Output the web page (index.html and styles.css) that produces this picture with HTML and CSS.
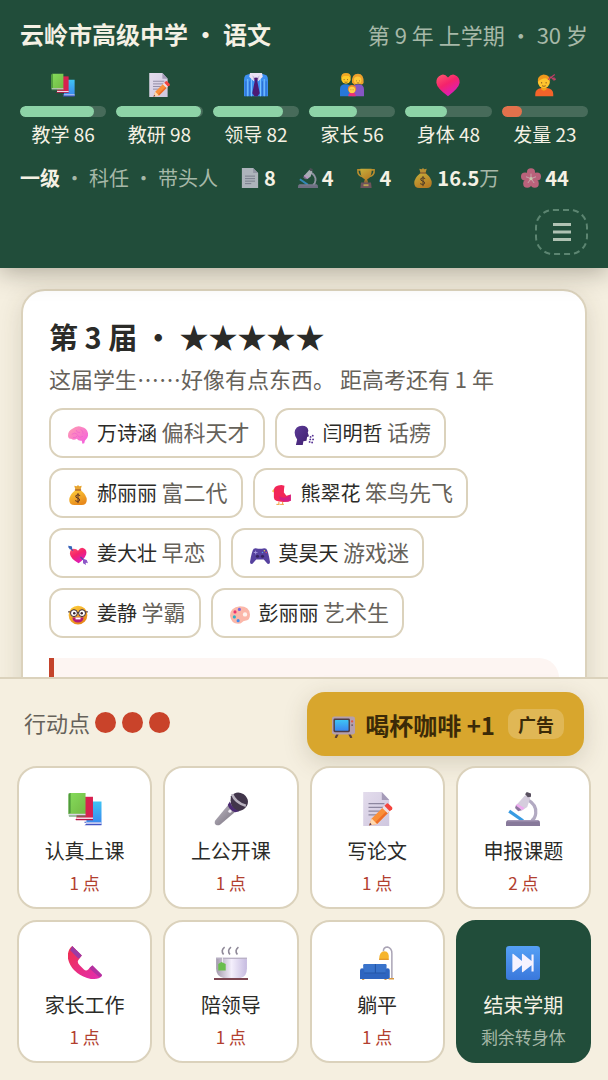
FILE: index.html
```html
<!DOCTYPE html>
<html lang="zh-CN">
  <head>
    <meta charset="UTF-8" />
    <meta name="viewport" content="width=device-width, initial-scale=1.0" />
    <title>云岭市高级中学</title>
    <link rel="stylesheet" href="styles.css">
  </head>
  <body>
    <!-- icons -->
    <svg class="sprite" aria-hidden="true">
      <defs>
        <linearGradient id="g-green" x2="1" y2="1"><stop stop-color="#86dc5c" /><stop offset="1" stop-color="#72b944" /></linearGradient>
        <linearGradient id="g-blue" x2="0" y2="1"><stop stop-color="#3fc4f4" /><stop offset="1" stop-color="#3a86ee" /></linearGradient>
        <linearGradient id="g-page" x2="1" y2="1"><stop stop-color="#e3dcec" /><stop offset="1" stop-color="#cfc7df" /></linearGradient>
        <linearGradient id="g-heart" x2="0.6" y2="1"><stop stop-color="#ff5a6e" /><stop offset=".5" stop-color="#f5236b" /><stop offset="1" stop-color="#d91cc0" /></linearGradient>
        <linearGradient id="g-gold" x2="0.5" y2="1"><stop stop-color="#ffd23c" /><stop offset="1" stop-color="#e88a1c" /></linearGradient>
        <linearGradient id="g-phone" x2="1" y2="1"><stop stop-color="#f0304a" /><stop offset="1" stop-color="#e32cb4" /></linearGradient>
        <linearGradient id="g-cup" x2="1"><stop stop-color="#a39aad" /><stop offset=".5" stop-color="#f4effc" /><stop offset="1" stop-color="#c6bbe0" /></linearGradient>
        <linearGradient id="g-mic" x2="1" y2="1"><stop stop-color="#c5c0ca" /><stop offset="1" stop-color="#6f6876" /></linearGradient>
        <linearGradient id="g-next" x2="0" y2="1"><stop stop-color="#55a0f5" /><stop offset="1" stop-color="#3a78dc" /></linearGradient>
        <linearGradient id="g-brain" x2="1" y2="1"><stop stop-color="#ff9fb0" /><stop offset="1" stop-color="#f45be0" /></linearGradient>
        <linearGradient id="g-head" x2="1" y2="1"><stop stop-color="#5b3a96" /><stop offset="1" stop-color="#402070" /></linearGradient>
      </defs>
      <symbol id="i-books" viewBox="0 0 32 32">
        <path fill="url(#g-blue)" d="M19 9h12.500v21.500H17z" /><path fill="#d9d0ee" d="M17 28.500h14.500v1.500H17z" /><path fill="#4254c4" d="M15.500 28h1.500v1h-1.500zM17 30h14.500v1.200H15.500z" />
        <path fill="#d8204f" d="M8 4.500h15.500v21H8z" /><path fill="#f0dce6" d="M8 24h15.500v1.500H8z" /><path fill="#b71445" d="M7 25.500h16.500v1H7.500z" />
        <path fill="url(#g-green)" d="M2 1h14.500v20H0.500V2.500z" /><path fill="#4f9a3c" d="M0.500 1.500 2.500 1v19l-2 1z" /><path fill="#dcd5e8" d="M1 20.500h15.500v1.500H1z" /><path fill="#4d8b52" d="M.5 22h16v1H1z" />
      </symbol>
      <symbol id="i-memo" viewBox="0 0 32 32">
        <path fill="url(#g-page)" d="M3 0h17.500l7 7.500V32H3z" /><path fill="#a59bb8" d="M20.500 0v7.500h7z" />
        <path stroke="#8d87a0" stroke-width="1.200" d="M8 11h15M8 14.500h14M8 18h11M8 21.500h8" />
        <path fill="#f98f3a" d="m11 25 11-11 5 5-11 11-7.500 1.500z" /><path fill="#ee6d28" d="m14.500 28.500 11-11 1.500 1.500-11 11z" /><path fill="#ffd8b0" d="m11 25 5 5-7.500 1.500z" /><path fill="#5a3048" d="m9.500 29 1.500 1.500-2.500 1z" />
        <path fill="#efdfe4" d="m21 15 2-2 5 5-2 2z" /><path fill="#f4443e" d="m23 13 2-2q1-.8 2 .2l3 3q1 1 .2 2L28 18z" />
      </symbol>
      <symbol id="i-shirt" viewBox="0 0 32 32">
        <path fill="#3c8ff0" d="M8 1h16l6 2q2 2 2 6v22H0V9q0-4 2-6z" /><path stroke="#79c2ff" stroke-width="1.400" d="M5 8v23M10 7v24M22 7v24M27 8v23" /><path stroke="#2860c8" d="M2.500 11v20M7.500 11v20M24.500 11v20M29.500 11v20" />
        <path fill="#e9e2f4" d="M8 0h16l1 5-6 6-3-5-3 5-6-6z" /><path fill="#c4b9d8" d="m11 3 5 4 5-4-2 7-3-4-3 4z" /><path fill="#4c1b74" d="m13.500 7 2.500-1 2.500 1-.8 4L21 27l-3 4h-4l-3-4 3.300-16z" />
      </symbol>
      <symbol id="i-family" viewBox="0 0 32 32">
        <path fill="#2878d8" d="M0 31V21q0-6 7-6t9 5v11z" /><path fill="#8656c4" d="M16 31V20q2-5 8-5 8 0 8 7v9z" />
        <path fill="#eda02c" d="M16 13q-1-12 8-12 8 0 7.500 12-1 3-4 2l-4-2-4 3z" /><circle cx="8" cy="8" r="6.300" fill="#ffca28" /><path fill="#f0a824" d="M1.500 7Q1 0 8 0t6.500 7L12 4H5z" /><circle cx="23.500" cy="9.500" r="5" fill="#ffc93a" />
        <path fill="#e8307c" d="M11 31q0-5 5-5t5 5z" /><circle cx="16" cy="21.500" r="5.500" fill="#ef8a2e" /><circle cx="16" cy="22.500" r="4.200" fill="#ffd04a" /><path fill="none" stroke="#6a3a20" stroke-width=".8" d="M5.500 8v1.500M10 8v1.500M22 10v1M26 10v1M14.500 22v.8M17.500 22v.8M6 12q2 1 4 0M22.500 13q1.500 1 3 0" />
      </symbol>
      <symbol id="i-heart" viewBox="0 0 32 32"><path fill="url(#g-heart)" d="M16 6q4-5 9-3.500Q32 5 31.500 13q-1 7-15.500 18Q1 20 .5 13 0 5 7 2.500 12 1 16 6z" /></symbol>
      <symbol id="i-hair" viewBox="0 0 32 32">
        <path fill="#f4632a" d="M3 31v-3q0-7 8-8h8q8 1 8 8v3z" /><path fill="#f2a018" d="M11 15h7v7q-3.500 3-7 0z" /><circle cx="14.500" cy="12" r="8" fill="#ffc52e" /><path fill="#f0981c" d="M6.500 12Q5 4 14 2q8 0 9 8l-6-3q-6 0-10.500 5z" />
        <path fill="none" stroke="#71401e" d="M11.500 12v2M17.500 12v2M12 17q2.500 1.500 5 0" /><path stroke="#c43c68" stroke-width="1.500" d="m20 9 9-7M22 5l8 4" /><circle cx="28" cy="8" r="1.600" fill="none" stroke="#d8446c" />
      </symbol>
      <symbol id="i-page" viewBox="0 0 32 32"><path fill="#dcd6e6" d="M3 0h18l8 8v24H3z" /><path fill="#b7adc6" d="M21 0v8h8z" /><path stroke="#928aa4" stroke-width="1.500" d="M8 13h16M8 17h16M8 21h16M8 25h10" /></symbol>
      <symbol id="i-scope" viewBox="0 0 32 32">
        <path fill="none" stroke="#b2aac2" stroke-width="3" d="M20 7q9 5 8 13-.5 5-4 7" /><path fill="#d5cddd" d="m10 12 8-9 5 2-3 9-6 4-5-3z" /><path fill="#8d749e" d="m9.500 12 5 5-3 1-3-3z" /><path fill="#58505f" d="m18 2 1.500-2 4 1.500v3l-3 .5z" /><path fill="#efaaf0" d="m10.500 11 7 4-2 2-6-4z" /><path stroke="#389be2" stroke-width="3" d="m3 18 13 9" />
        <path fill="#87799a" d="M2 26.500h28q2 0 2 3V32H0v-2.500q0-3 2-3z" /><path fill="#a698b7" d="M2 26.500h28v1.200H2z" />
      </symbol>
      <symbol id="i-trophy" viewBox="0 0 32 32"><path fill="none" stroke="#e9a22a" stroke-width="2.500" d="M8 3H3q-1 9 8 11M24 3h5q1 9-8 11" /><path fill="url(#g-gold)" d="M7 1h18q1 13-7 17v4h-4v-4Q6 14 7 1z" /><path fill="#b97835" d="M13 20h6v4h-6z" /><path fill="#885668" d="M8 23h16l1 9H7z" /><path fill="#ecc05a" d="M12 26h8v3h-8z" /></symbol>
      <symbol id="i-bag" viewBox="0 0 32 32"><path fill="#e9a631" d="m10 1 4 1 2-2 2 2 4-1-2 7h-8z" /><path fill="url(#g-gold)" d="M12 8h8q10 8 10 16 0 8-8 8H10q-8 0-8-8Q2 16 12 8z" /><path stroke="#a85c27" stroke-width="2" d="M11 8h10" /><path fill="none" stroke="#5c3422" stroke-width="1.600" d="M19.500 17q-4-3-7 0-1 3 3 4t3 4q-3 3-7 0M16 13v16" /></symbol>
      <symbol id="i-flower" viewBox="0 0 32 32"><g fill="#ee6a91"><circle cx="16" cy="7" r="6.500" /><circle cx="25.500" cy="13.500" r="6.500" /><circle cx="22" cy="25" r="6.500" /><circle cx="10" cy="25" r="6.500" /><circle cx="6.500" cy="13.500" r="6.500" /><circle cx="16" cy="17" r="8" /></g><path stroke="#ffd7df" stroke-width="1.300" d="M16 17V9M16 17l8-3M16 17l5 7M16 17l-5 7M16 17l-8-3" /><circle cx="16" cy="17" r="2.500" fill="#fff0ce" /></symbol>
      <symbol id="i-brain" viewBox="0 0 32 32"><path fill="url(#g-brain)" d="M0 17Q0 9 7 6q7-6 15-3 8 1 10 10 1 8-5 12l-1 4-3 1-1-5q-5 1-8-3-5 3-9 0Q0 22 0 17z" /><path fill="none" stroke="#ee5fcb" d="M6 15q5-4 9 0M13 8q1 5 6 4M20 7q5 2 4 7M8 20q5 1 7-3 4 5 9 1" /></symbol>
      <symbol id="i-talk" viewBox="0 0 32 32"><path fill="url(#g-head)" d="M1 12Q2 1 13 1q9 0 10 8l-1 3 2 6-3 1-1 6-5 1-1 6H3l2-9Q1 18 1 12z" /><g fill="#563393"><circle cx="26.500" cy="19" r="1.500" /><circle cx="30" cy="17" r="1.500" /><circle cx="26" cy="23" r="1.500" /><circle cx="30.500" cy="23" r="1.500" /><circle cx="25" cy="27" r="1.500" /><circle cx="29" cy="28" r="1.500" /></g></symbol>
      <symbol id="i-bird" viewBox="0 0 32 32"><path fill="#f22658" d="M3 8q0-7 12-8l5 1q-1 5-1 11l4 5 7-2v10q-4 2-12 2-15 0-15-7z" /><path fill="#d41d84" d="M12 18q6 4 12 1l6-4v10q-8 3-14 0-5-2-4-7z" /><path fill="#f3af37" d="m0 10 3-4v6z" /><path fill="none" stroke="#f0a344" stroke-width="1.600" d="M11 27v4M17 27v4M7 31h5M13 31h6" /></symbol>
      <symbol id="i-arrow" viewBox="0 0 32 32"><path fill="url(#g-heart)" d="M16 9q4-6 9-4 6 3 4 10-3 8-12 14Q4 22 3 14 3 7 9 6q5 0 7 3z" /><path stroke="#5748a8" stroke-width="2" d="m1 3 7 6M20 19l9 9" /><path fill="#3566ba" d="m0 1 6 1 1 4-4 1z" /><path fill="#8d57c8" d="m24 22 6 2 2 5-4-1 1 4-5-3z" /></symbol>
      <symbol id="i-pad" viewBox="0 0 32 32"><path fill="#56419f" d="M6 6q3-2 7 0h6q4-2 7 0 3 3 6 21 0 4-4 3l-6-7H10l-6 7q-4 1-4-3Q3 9 6 6z" /><path stroke="#a79be0" stroke-width="1.400" d="M6 12h6M9 9v6" /><circle cx="23" cy="9" r="1.200" fill="#ddcf52" /><circle cx="26" cy="12" r="1.200" fill="#e64d6b" /><circle cx="20" cy="12" r="1.200" fill="#59a0ef" /><circle cx="12" cy="18" r="2.500" fill="#352460" /><circle cx="20" cy="18" r="2.500" fill="#352460" /></symbol>
      <symbol id="i-nerd" viewBox="0 0 32 32"><circle cx="16" cy="16" r="15" fill="url(#g-gold)" /><path fill="#b01a78" d="M7 20h18q-1 8-9 8t-9-8z" /><path fill="#fff" d="M12 20h8v3h-8z" /><path stroke="#392530" stroke-width="1.500" d="M0 11h5M27 11h5M14 12h4" /><g fill="#fff" stroke="#392530" stroke-width="1.600"><circle cx="9.500" cy="13" r="5.500" /><circle cx="22.500" cy="13" r="5.500" /></g><circle cx="10" cy="13" r="2" fill="#392530" /><circle cx="22" cy="13" r="2" fill="#392530" /></symbol>
      <symbol id="i-art" viewBox="0 0 32 32"><path fill="#fbb7a9" d="M0 17Q0 4 16 2q15 0 16 13 0 10-8 10-3 0-5 3-2 2-6 2Q2 30 0 17z" /><circle cx="24" cy="15" r="3.500" fill="#fff3ee" /><circle cx="15" cy="7" r="2.500" fill="#7965db" /><circle cx="8" cy="11" r="2.500" fill="#eb356d" /><circle cx="7" cy="19" r="2.500" fill="#2dafc7" /><circle cx="13" cy="25" r="2.500" fill="#448bed" /></symbol>
      <symbol id="i-tv" viewBox="0 0 32 32"><path stroke="#5a4038" stroke-width="3" d="m8 26-3 6M24 26l3 6" /><rect y="2" width="32" height="25" rx="3" fill="#b49fad" /><rect x="2" y="5" width="23" height="19" rx="2" fill="#4e3e45" /><rect x="4" y="7" width="19" height="15" rx="1" fill="url(#g-blue)" /><circle cx="28" cy="9" r="1.600" fill="#df5944" /><circle cx="28" cy="14" r="1.300" fill="#675863" /></symbol>
      <symbol id="i-mic" viewBox="0 0 32 32"><path fill="url(#g-mic)" d="M15 10 1 27q-1 3 1 4t4-.5L22 17z" /><path fill="#41354a" d="M16 4q5-6 12-2 6 5 3 11-3 5-9 5-8-4-6-14z" /><path fill="#4b2a72" d="M15 9q2 7 9 9l-4 1q-6-2-7-7z" /><path fill="none" stroke="#b9b2bf" stroke-width="2.500" d="M17 2q3 8 13 11" /><circle cx="15" cy="18" r="1.500" fill="#eeeaf2" /></symbol>
      <symbol id="i-phone" viewBox="0 0 32 32"><path fill="url(#g-phone)" d="M4 0 13 9l-3 4q-2 2 1 5l4 4q2 2 4 0l3-3 10 9q-4 5-14 2Q3 25 0 12-1 4 4 0z" /><path fill="#9b3aa5" d="m4 0 9 9-2 2q-1 1-2 0L2 4z" /><path fill="#b430a0" d="m20 21 3-3 9 9q0 2-3 2z" /></symbol>
      <symbol id="i-tea" viewBox="0 0 32 32"><path fill="none" stroke="#8f8998" stroke-width="1.500" d="M10 1q-4 3-1 7M16 1q-4 3-1 7M23 1q-4 3-1 7" /><path fill="url(#g-cup)" d="M2 11h29v10q0 8-6 9H9q-7-1-7-9z" /><path fill="#b9b0c4" d="M2 11h29v1.200H2z" /><path stroke="#eee" d="M8 10v7" /><path fill="#6abe4c" d="m4 17 3-2 4 2v6H4z" /><path fill="#7c4652" d="M0 30h32v2H0z" /></symbol>
      <symbol id="i-sofa" viewBox="0 0 32 32"><path fill="none" stroke="#aaa4b5" stroke-width="1.400" d="M22 5q0-4 4-4 4 1 4 6v24" /><path fill="#f6b52e" d="M18 13q0-8 5-8t4 8z" /><path fill="#de8e25" d="M18 12h9v1h-9z" /><path fill="#3973cb" d="M3 18q0-1 1-1h20q1 0 1 1v10H3z" /><path fill="#2456a8" d="M14 17h1v9h-1zM3 25h22v1H3z" /><path fill="#2e65c0" d="M0 23q0-2 2-2t2 2v3h20v-3q0-2 2-2t2 2v8H0z" /><path fill="#d79841" d="M2 31h2v1H2zM23 31h2v1h-2zM27 30h5v1.500h-5z" /></symbol>
      <symbol id="i-next" viewBox="0 0 32 32"><rect width="32" height="32" rx="3" fill="url(#g-next)" /><path fill="#f6f2ff" d="M6 8q0-1 1-.5L15 14V8q0-1 1-.5l8 6.500V8h2v16h-2v-6l-8 6.500q-1 .5-1-.5v-6l-8 6.500q-1 .5-1-.5z" /></symbol>
    </svg>

    <header class="header">
      <div class="top">
        <h1 class="school">云岭市高级中学 · 语文</h1>
        <span class="term">第 9 年 上学期 · 30 岁</span>
      </div>
      <div class="stats">
        <div class="stat"><svg class="stat-icon"><use href="#i-books" /></svg><div class="bar"><div class="fill" style="width: 86%"></div></div><span>教学 86</span></div>
        <div class="stat"><svg class="stat-icon"><use href="#i-memo" /></svg><div class="bar"><div class="fill" style="width: 98%"></div></div><span>教研 98</span></div>
        <div class="stat"><svg class="stat-icon"><use href="#i-shirt" /></svg><div class="bar"><div class="fill" style="width: 82%"></div></div><span>领导 82</span></div>
        <div class="stat"><svg class="stat-icon"><use href="#i-family" /></svg><div class="bar"><div class="fill" style="width: 56%"></div></div><span>家长 56</span></div>
        <div class="stat"><svg class="stat-icon"><use href="#i-heart" /></svg><div class="bar"><div class="fill" style="width: 48%"></div></div><span>身体 48</span></div>
        <div class="stat"><svg class="stat-icon"><use href="#i-hair" /></svg><div class="bar"><div class="fill low" style="width: 23%"></div></div><span>发量 23</span></div>
      </div>
      <div class="meta">
        <span><b>一级</b> · 科任 · 带头人</span>
        <span class="count"><svg><use href="#i-page" /></svg><b>8</b></span>
        <span class="count"><svg><use href="#i-scope" /></svg><b>4</b></span>
        <span class="count"><svg><use href="#i-trophy" /></svg><b>4</b></span>
        <span class="count"><svg><use href="#i-bag" /></svg><span><b>16.5</b>万</span></span>
        <span class="count"><svg><use href="#i-flower" /></svg><b>44</b></span>
        <button class="menu" aria-label="菜单"><svg viewBox="0 0 18 18"><path d="M0 1.500h18M0 9h18M0 16.500h18" /></svg></button>
      </div>
    </header>

    <main class="main">
      <section class="card">
        <h2 class="card-title">第 3 届 · ★★★★★</h2>
        <p class="desc">这届学生……好像有点东西。 距高考还有 1 年</p>
        <div class="chips">
          <div class="chip"><svg><use href="#i-brain" /></svg><p>万诗涵 <span>偏科天才</span></p></div>
          <div class="chip"><svg><use href="#i-talk" /></svg><p>闫明哲 <span>话痨</span></p></div>
          <div class="chip"><svg><use href="#i-bag" /></svg><p>郝丽丽 <span>富二代</span></p></div>
          <div class="chip"><svg><use href="#i-bird" /></svg><p>熊翠花 <span>笨鸟先飞</span></p></div>
          <div class="chip"><svg><use href="#i-arrow" /></svg><p>姜大壮 <span>早恋</span></p></div>
          <div class="chip"><svg><use href="#i-pad" /></svg><p>莫昊天 <span>游戏迷</span></p></div>
          <div class="chip"><svg><use href="#i-nerd" /></svg><p>姜静 <span>学霸</span></p></div>
          <div class="chip"><svg><use href="#i-art" /></svg><p>彭丽丽 <span>艺术生</span></p></div>
        </div>
        <div class="alert"></div>
      </section>
    </main>

    <footer class="footer">
      <div class="points">
        <span class="left">行动点</span>
        <div class="dots"><i class="dot"></i><i class="dot"></i><i class="dot"></i></div>
        <button class="ad"><svg><use href="#i-tv" /></svg>喝杯咖啡 +1<span class="tag">广告</span></button>
      </div>
      <div class="actions">
        <button class="action"><svg><use href="#i-books" /></svg><span>认真上课</span><small>1 点</small></button>
        <button class="action"><svg><use href="#i-mic" /></svg><span>上公开课</span><small>1 点</small></button>
        <button class="action"><svg><use href="#i-memo" /></svg><span>写论文</span><small>1 点</small></button>
        <button class="action"><svg><use href="#i-scope" /></svg><span>申报课题</span><small>2 点</small></button>
        <button class="action"><svg><use href="#i-phone" /></svg><span>家长工作</span><small>1 点</small></button>
        <button class="action"><svg><use href="#i-tea" /></svg><span>陪领导</span><small>1 点</small></button>
        <button class="action"><svg><use href="#i-sofa" /></svg><span>躺平</span><small>1 点</small></button>
        <button class="action end"><svg><use href="#i-next" /></svg><span>结束学期</span><small>剩余转身体</small></button>
      </div>
    </footer>
  </body>
</html>
```
FILE: styles.css
```css
* {
  box-sizing: border-box;
}
body {
  margin: 0;
  height: 100vh;
  display: flex;
  flex-direction: column;
  background-color: #f5efe0;
  color: #2b2b28;
  font-family: "Noto Sans CJK SC", sans-serif;
  font-size: 20px;
}
button {
  font-family: inherit;
  color: inherit;
  cursor: pointer;
}
.sprite {
  position: absolute;
  width: 0;
  height: 0;
}

/* header */
.header {
  position: relative;
  padding: 16px 20px 13px;
  background-color: #214d3a;
  color: #f5f1e4;
  box-shadow: 0 4px 24px rgba(40, 35, 20, 0.35);
}
.top {
  display: flex;
  justify-content: space-between;
  align-items: center;
  line-height: 36px;
}
.school {
  margin: 0;
  font-size: 24px;
}
.term {
  font-size: 22px;
  color: #a6b8a8;
}
.stats {
  display: grid;
  grid-template-columns: repeat(6, 1fr);
  gap: 10px;
  margin-top: 21px;
}
.stat {
  display: flex;
  flex-direction: column;
  align-items: center;
  font-size: 19px;
  line-height: 24px;
}
.stat-icon {
  width: 24px;
  height: 24px;
}
.bar {
  width: 100%;
  height: 11px;
  margin: 9px 0 5px;
  border-radius: 6px;
  background-color: #476b5a;
  overflow: hidden;
}
.fill {
  height: 100%;
  border-radius: 6px;
  background-color: #8dd3a7;
}
.low {
  background-color: #e2714c;
}
.meta {
  display: flex;
  flex-wrap: wrap;
  align-items: center;
  gap: 17px 22px;
  margin-top: 18px;
  line-height: 28px;
  color: #a6b8a8;
}
.meta b {
  color: #f5f1e4;
}
.count {
  display: flex;
  align-items: center;
  gap: 4px;
}
.count svg {
  width: 20px;
  height: 20px;
  opacity: 0.75;
}
.menu {
  display: flex;
  justify-content: center;
  align-items: center;
  width: 53px;
  height: 46px;
  margin-left: auto;
  border: 2px dashed #5c8571;
  border-radius: 18px;
  background: none;
}
.menu svg {
  width: 18px;
  height: 18px;
  stroke: #b0c2b3;
  stroke-width: 3;
}

/* class card */
.main {
  flex: 1;
  min-height: 0;
  padding: 21px 21px 0;
  overflow: hidden;
}
.card {
  padding: 25px 26px;
  border: 2px solid #dbd2bc;
  border-radius: 24px;
  background-color: #fff;
  box-shadow: 0 6px 24px rgba(70, 60, 30, 0.16);
}
.card-title {
  margin: 0;
  font-size: 29px;
  line-height: 40px;
}
.desc {
  margin: 4px 0 12px;
  font-size: 22px;
  line-height: 36px;
  color: #66625a;
}
.chips {
  display: flex;
  flex-wrap: wrap;
  gap: 10px;
}
.chip {
  display: flex;
  align-items: center;
  height: 50px;
  padding: 0 13px;
  border: 2px solid #dbd2bc;
  border-radius: 14px;
}
.chip svg {
  width: 20px;
  height: 20px;
  margin: 4px 9px 0 4px;
}
.chip p {
  margin: 0;
  line-height: 46px;
}
.chip span {
  font-size: 22px;
  line-height: 30px;
  color: #66625a;
}
.alert {
  height: 100px;
  margin-top: 20px;
  border-left: 5px solid #c4432b;
  border-radius: 0 20px 20px 0;
  background-color: #fdf5f2;
}

/* actions */
.footer {
  position: relative;
  padding: 13px 17px 17px;
  border-top: 2px solid #dbd2bc;
  background-color: #f5efe0;
}
.points {
  display: flex;
  align-items: center;
  gap: 5px;
  padding: 0 7px;
  font-size: 22px;
  color: #66625a;
}
.left,
.dots {
  padding-bottom: 4px;
}
.dots {
  display: flex;
  gap: 6px;
}
.dot {
  width: 21px;
  height: 21px;
  border-radius: 50%;
  background-color: #c9432a;
}
.ad {
  display: flex;
  align-items: center;
  height: 64px;
  margin-left: auto;
  padding: 0 20px 0 25px;
  border: none;
  border-radius: 18px;
  background-color: #d8a62d;
  color: #3b2a08;
  font-size: 24px;
  font-weight: bold;
  box-shadow: 0 6px 24px rgba(70, 60, 30, 0.18);
}
.ad svg {
  width: 23px;
  height: 23px;
  margin: 4px 10px 0 0;
}
.tag {
  margin-left: 13px;
  padding: 0 10px;
  border-radius: 10px;
  background-color: #e0b755;
  font-size: 18px;
  line-height: 30px;
}
.actions {
  display: grid;
  grid-template-columns: repeat(4, 1fr);
  gap: 11px;
  margin-top: 10px;
}
.action {
  display: flex;
  flex-direction: column;
  align-items: center;
  padding: 24px 0 8px;
  border: 2px solid #dbd2bc;
  border-radius: 20px;
  background-color: #fff;
  font-size: 20px;
  line-height: 32px;
}
.action svg {
  width: 34px;
  height: 34px;
  margin-bottom: 9px;
}
.action small {
  font-size: 17px;
  color: #b2402f;
}
.end {
  border-color: #214d3a;
  background-color: #214d3a;
  color: #f5f1e4;
}
.end small {
  color: #a6b8a8;
}
```
